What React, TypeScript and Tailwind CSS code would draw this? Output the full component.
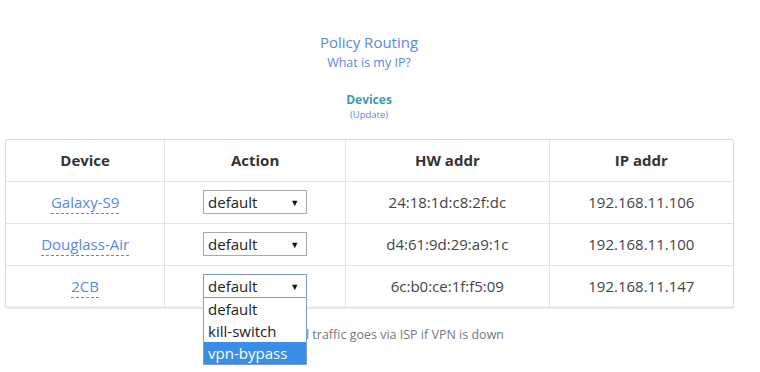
import React from "react";

const devices = [
  { name: "Galaxy-S9", hw: "24:18:1d:c8:2f:dc", ip: "192.168.11.106" },
  { name: "Douglass-Air", hw: "d4:61:9d:29:a9:1c", ip: "192.168.11.100" },
  { name: "2CB", hw: "6c:b0:ce:1f:f5:09", ip: "192.168.11.147" },
];

function Select({ open }: { open?: boolean }) {
  return (
    <div className="relative w-[104px] h-[24px]">
      <div
        className={
          "flex items-center justify-between w-full h-full bg-white border pl-[4px] pr-[7px] text-[15px] text-[#222] " +
          (open ? "border-[#7b9bd9]" : "border-[#a9a9a9]")
        }
      >
        <span className="leading-none mt-[1px]">default</span>
        <span className="text-[9px] leading-none text-[#111]">▼</span>
      </div>
      {open && (
        <div className="absolute left-0 top-[24px] w-[104px] bg-white border border-[#7b9bd9] border-t-0 z-10 text-[15px] text-[#222]">
          <div className="h-[22px] flex items-center pl-[4px]">default</div>
          <div className="h-[22px] flex items-center pl-[4px]">kill-switch</div>
          <div className="h-[22px] flex items-center pl-[4px] bg-[#3a8ee6] text-white">vpn-bypass</div>
        </div>
      )}
    </div>
  );
}

export default function App() {
  return (
    <div
      className="w-[760px] h-[372px] bg-white overflow-hidden"
      style={{ fontFamily: '"Open Sans", "Noto Sans", sans-serif' }}
    >
      <div className="w-[738px] flex flex-col items-center">
        <div className="mt-[32px] text-[15px] leading-[20px] text-[#5a86e8]">Policy Routing</div>
        <div className="mt-[2px] text-[12.5px] leading-[18px] text-[#5a86e8]">What is my IP?</div>
        <div className="mt-[20px] text-[12px] leading-[16px] font-bold text-[#3e9cab]">Devices</div>
        <div className="mt-[1px] text-[9.5px] leading-[12px] text-[#5a86e8]">(Update)</div>
      </div>
      <div className="ml-[5px] mt-[18px] w-[729px] border border-[#dedede] border-t-[#d6d6d6] rounded-[3px] shadow-[0_1px_2px_rgba(0,0,0,0.08)]">
        <table className="w-full border-collapse text-[15px] text-[#333]">
          <colgroup>
            <col className="w-[159px]" />
            <col className="w-[181px]" />
            <col className="w-[204px]" />
            <col className="w-[184px]" />
          </colgroup>
          <thead>
            <tr className="h-[41px]">
              <th className="font-bold text-[#333] border-r border-[#e4e4e4]">Device</th>
              <th className="font-bold text-[#333] border-r border-[#e4e4e4]">Action</th>
              <th className="font-bold text-[#333] border-r border-[#e4e4e4]">HW addr</th>
              <th className="font-bold text-[#333]">IP addr</th>
            </tr>
          </thead>
          <tbody>
            {devices.map((d, i) => (
              <tr key={d.name} className="h-[42px] border-t border-[#e4e4e4]">
                <td className="text-center border-r border-[#e4e4e4]">
                  <span className="text-[#5a86e8] border-b border-dashed border-[#5a86e8] pb-[1px]">
                    {d.name}
                  </span>
                </td>
                <td className="border-r border-[#e4e4e4]">
                  <div className="flex justify-center">
                    <Select open={i === 2} />
                  </div>
                </td>
                <td className="text-center text-[#444] border-r border-[#e4e4e4]">{d.hw}</td>
                <td className="text-center text-[#444]">{d.ip}</td>
              </tr>
            ))}
          </tbody>
        </table>
      </div>
      <div className="w-[504px] mt-[18px] text-right text-[12.5px] leading-[18px] text-[#777]">
        vpn-bypass: all traffic goes via ISP if VPN is down
      </div>
    </div>
  );
}
